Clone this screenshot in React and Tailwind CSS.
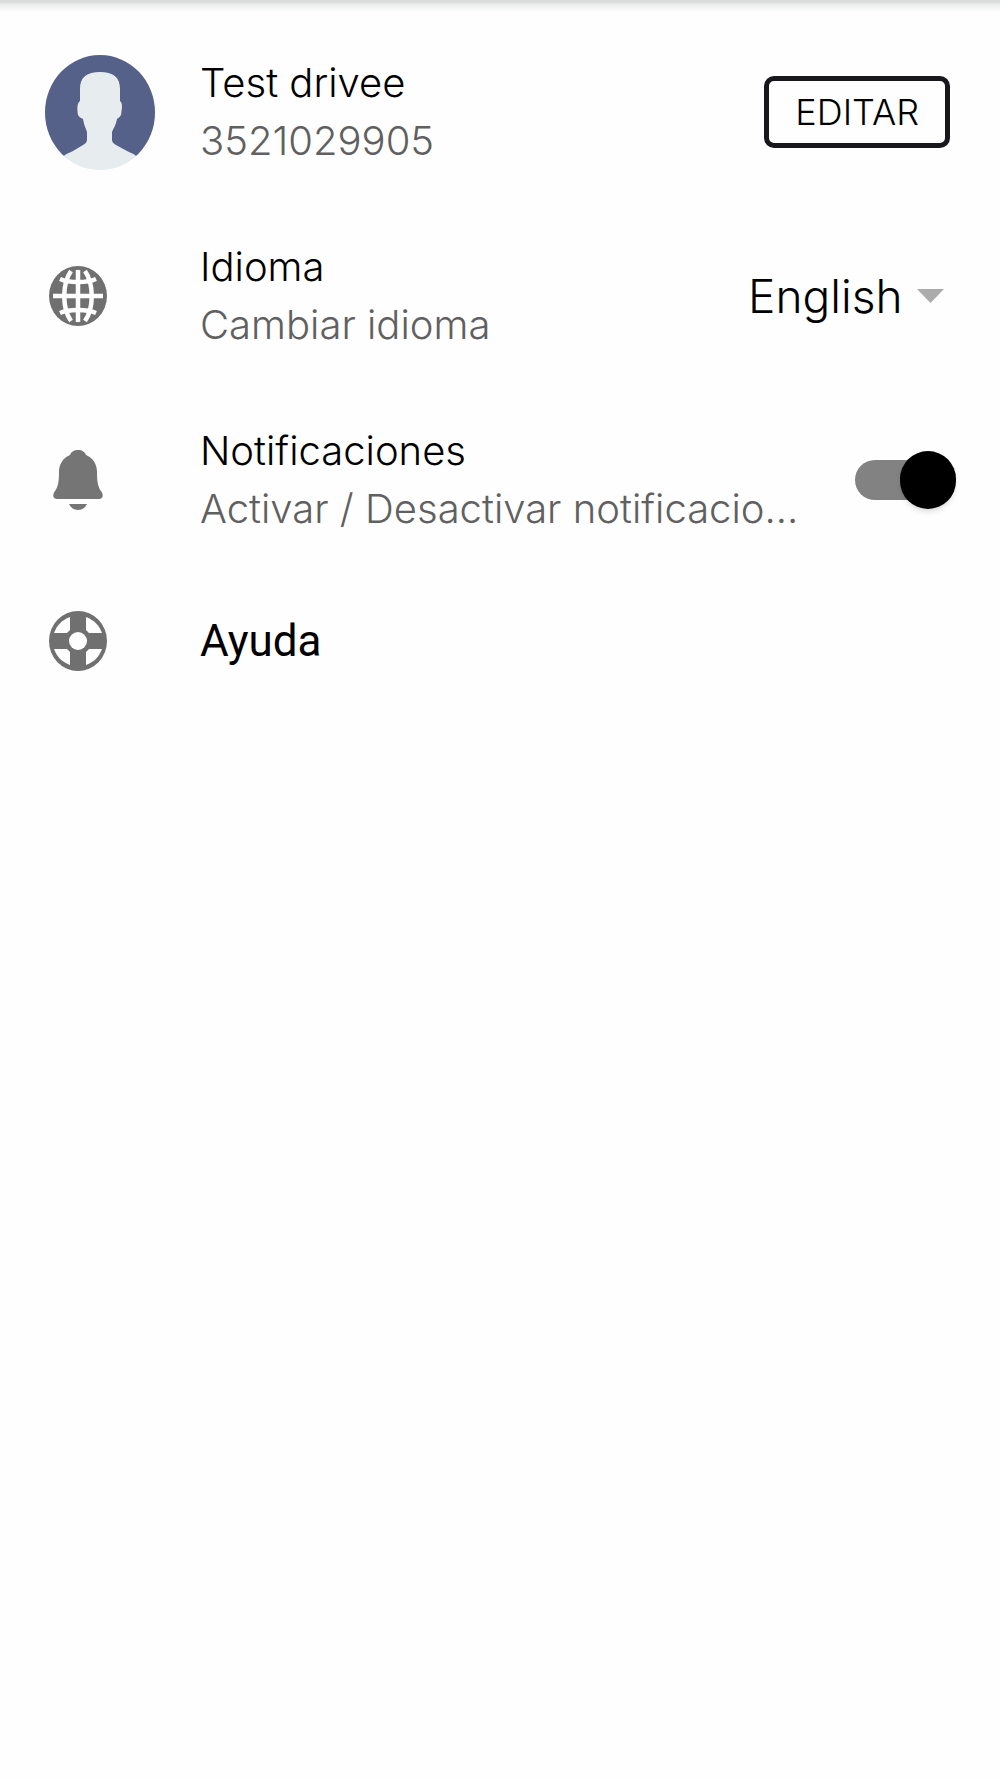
import React, { useState } from 'react';

const Avatar = () => (
  <svg className="h-[115px] w-[110px]" viewBox="0 0 110 115" aria-hidden="true">
    <defs>
      <clipPath id="avatar-clip">
        <ellipse cx="55" cy="57.5" rx="55" ry="57.5" />
      </clipPath>
    </defs>
    <g clipPath="url(#avatar-clip)">
      <rect width="110" height="115" fill="#e7edef" />
      <rect width="110" height="101" fill="#56618a" />
      <path
        d="M35 46 V34 C35 22 42 17 55 17 C68 17 75 22 75 34 V46 C78 48 77 54 76 60 C75 62 73 63 72 64 C71 70 68 74 67 77 V85 C67 87 68 88 71 90 L82 96 C86 98 90 99 93 103 V115 H17 V103 C20 99 24 98 28 96 L38 90 C41 88 42 87 42 85 V77 C41 74 39 70 38 64 C36 63 34 62 33 60 C32 54 32 48 35 46 Z"
        fill="#e7edef"
      />
    </g>
  </svg>
);

const GlobeIcon = () => (
  <svg className="h-[60px] w-[58px]" viewBox="0 0 58 60" aria-hidden="true">
    <ellipse cx="29" cy="30" rx="29" ry="30" fill="#707070" />
    <g fill="none" stroke="#fefefe" strokeWidth="4.500">
      <path d="M29 4 V56 M4 30 H54" />
      <path d="M22 5 C13 18 13 42 22 55 M36 5 C45 18 45 42 36 55" />
      <path d="M11 13 C20 17 38 17 47 13 M11 47 C20 43 38 43 47 47" />
    </g>
  </svg>
);

const BellIcon = () => (
  <svg className="h-[60px] w-[58px]" viewBox="0 0 58 60" aria-hidden="true">
    <path
      d="M29 0 C33 0 36 2 37 5 C44 8 48 14 48 22 C48 32 49 37 52 41 C55 45 54 49 50 49 H8 C4 49 3 45 6 41 C9 37 10 32 10 22 C10 14 14 8 21 5 C22 2 25 0 29 0 Z"
      fill="#757575"
    />
    <path d="M20 54 H38 C36 58 33 60 29 60 C25 60 22 58 20 54 Z" fill="#757575" />
  </svg>
);

const HelpIcon = () => (
  <svg className="h-[60px] w-[58px]" viewBox="0 0 58 60" aria-hidden="true">
    <ellipse cx="29" cy="30" rx="29" ry="30" fill="#707070" />
    <g fill="#fefefe">
      <path d="M21 6 V19 C20 20 19 21 18 22 H5 C8 14 13 9 21 6 Z" />
      <path d="M37 6 V19 C38 20 39 21 40 22 H53 C50 14 45 9 37 6 Z" />
      <path d="M21 54 V41 C20 40 19 39 18 38 H5 C8 46 13 51 21 54 Z" />
      <path d="M37 54 V41 C38 40 39 39 40 38 H53 C50 46 45 51 37 54 Z" />
      <circle cx="29" cy="30" r="9" />
    </g>
  </svg>
);

const SettingsRow = ({ icon, title, subtitle, htmlFor, children }) => {
  const Title = htmlFor ? 'label' : 'div';

  return (
    <li className="flex h-[184px] items-center pr-[50px] pl-[45px]">
      <div className="flex w-[155px] shrink-0 items-center">{icon}</div>
      <div className="min-w-0 flex-1 text-[40px] leading-[58px] font-light">
        <Title htmlFor={htmlFor} className="block truncate text-black">{title}</Title>
        <p className="truncate text-[#606060]">{subtitle}</p>
      </div>
      {children}
    </li>
  );
};

const App = () => {
  const [language, setLanguage] = useState('en');
  const [notifications, setNotifications] = useState(true);

  return (
    <main className="min-h-screen bg-[#fefefe] font-['Inter',sans-serif]">
      {/* Toolbar shadow */}
      <div className="h-[3px] bg-[#d9dcdb]" />
      <div className="h-[9px] bg-linear-to-b from-[#e6e9e8] to-[#fefefe]" />

      <ul className="pt-2">
        <SettingsRow icon={<Avatar />} title="Test drivee" subtitle="3521029905">
          <button
            type="button"
            className="h-[72px] shrink-0 rounded-[10px] border-[5px] border-[#18181c] px-[26px] text-[36px] leading-[58px] font-light text-black"
          >
            EDITAR
          </button>
        </SettingsRow>

        <SettingsRow icon={<div className="pl-1"><GlobeIcon /></div>} title="Idioma" subtitle="Cambiar idioma" htmlFor="language">
          <div className="relative shrink-0">
            <select
              id="language"
              value={language}
              onChange={(e) => setLanguage(e.target.value)}
              className="appearance-none bg-transparent pr-8 text-[46px] leading-[58px] font-light text-black"
            >
              <option value="en">English</option>
              <option value="es">Español</option>
            </select>
            <svg className="pointer-events-none absolute inset-y-0 right-0 my-auto size-10" viewBox="0 0 40 40" aria-hidden="true">
              <path d="M7 13 H34 L20.500 27 Z" fill="#ababab" />
            </svg>
          </div>
        </SettingsRow>

        <SettingsRow
          icon={<div className="pl-1"><BellIcon /></div>}
          title="Notificaciones"
          subtitle="Activar / Desactivar notificacio..."
          htmlFor="notifications"
        >
          <div className="relative flex shrink-0 items-center">
            <input
              id="notifications"
              type="checkbox"
              role="switch"
              checked={notifications}
              onChange={(e) => setNotifications(e.target.checked)}
              className="peer h-10 w-[95px] appearance-none rounded-full bg-[#bdbdbd] checked:bg-[#828282]"
            />
            <span className="pointer-events-none absolute -left-[5px] h-[58px] w-[56px] rounded-full bg-white shadow-md peer-checked:left-[45px] peer-checked:bg-black" />
          </div>
        </SettingsRow>

        <li className="flex h-[138px] items-center pr-[50px] pl-[45px]">
          <div className="w-[155px] shrink-0 pl-1">
            <HelpIcon />
          </div>
          <a href="#ayuda" className="font-['Roboto',sans-serif] text-[44px] leading-[58px] text-black">
            Ayuda
          </a>
        </li>
      </ul>
    </main>
  );
};

export default App;
